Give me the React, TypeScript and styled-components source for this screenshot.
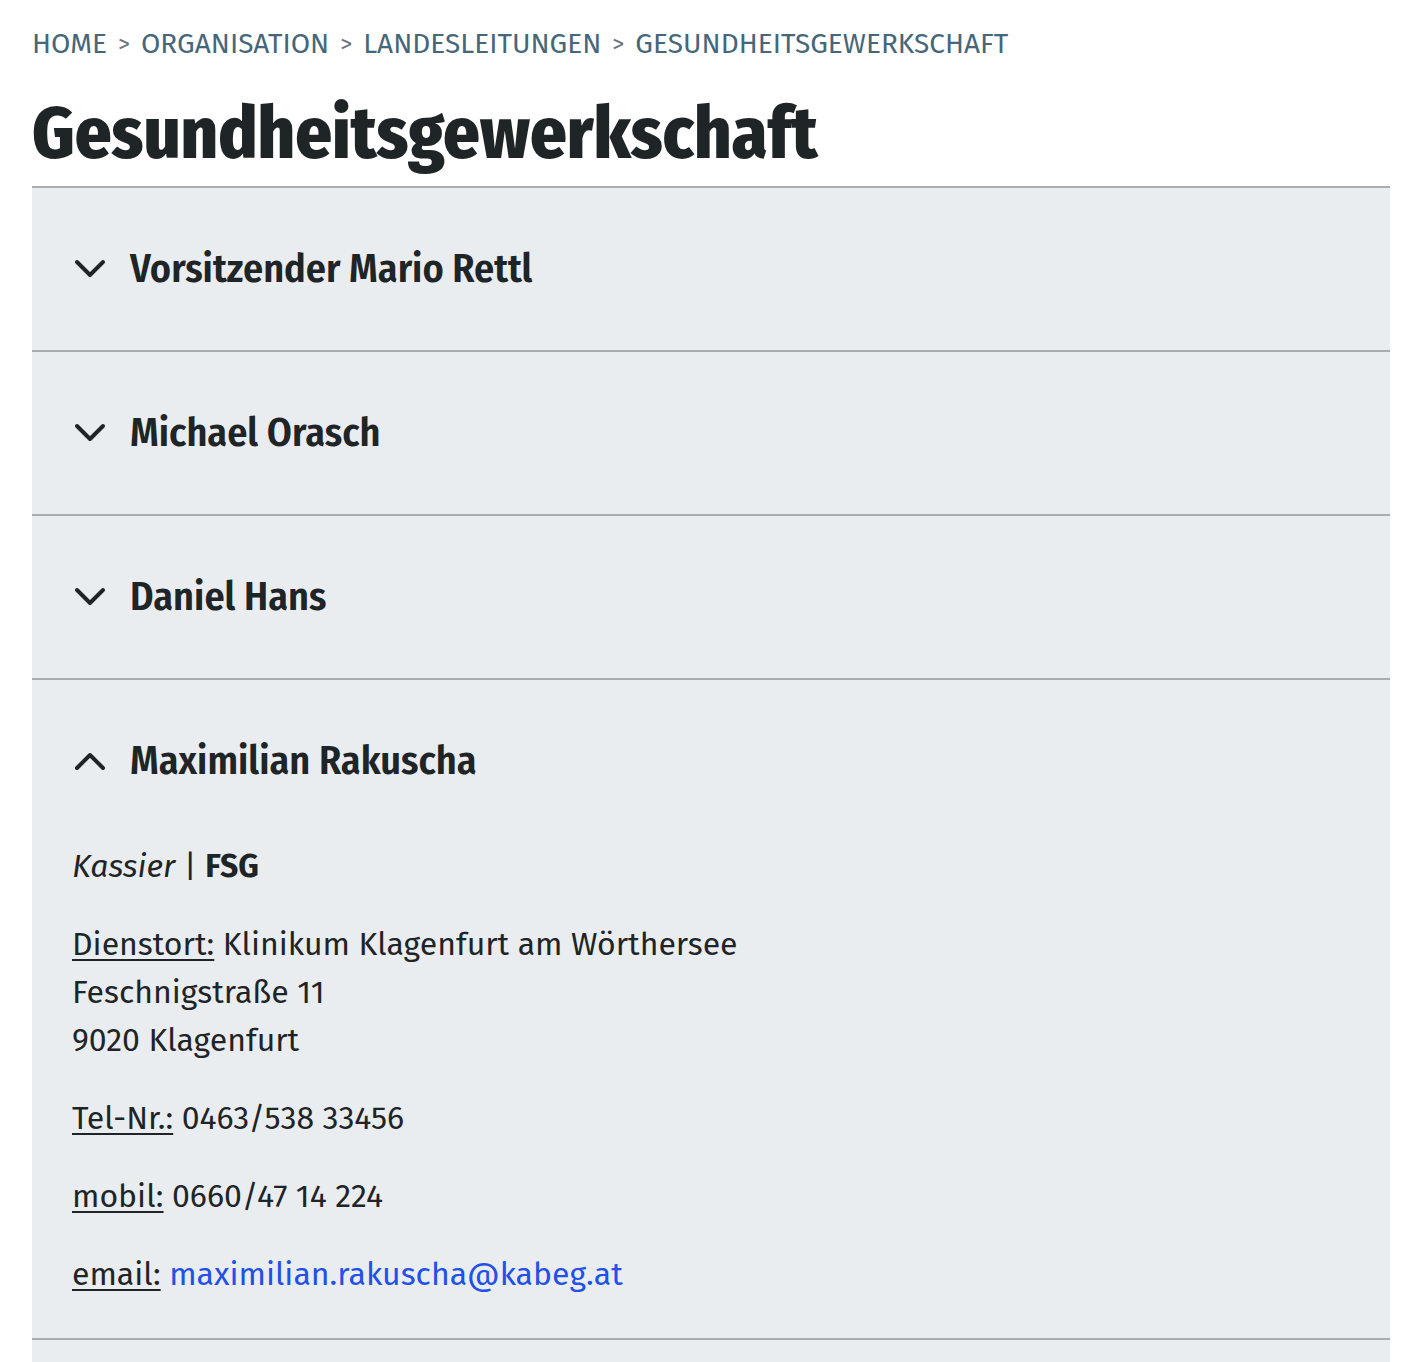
import React, { useState } from "react";
import styled, { createGlobalStyle } from "styled-components";

const GlobalStyle = createGlobalStyle`
  html, body {
    margin: 0;
    padding: 0;
    background: #ffffff;
  }
  body {
    font-family: "Fira Sans", Roboto, "Liberation Sans", sans-serif;
    color: #1f2427;
  }
`;

const condensed = `"Fira Sans Condensed", "Liberation Sans Narrow", "DejaVu Sans Condensed", Roboto, sans-serif`;

const Page = styled.div`
  padding: 26px 30px 0 32px;
`;

const Breadcrumb = styled.nav`
  display: flex;
  align-items: center;
  gap: 11px;
  font-size: 28px;
  line-height: 36px;
  text-transform: uppercase;
  color: #466779;
`;

const Crumb = styled.a`
  color: #466779;
  text-decoration: none;
`;

const CrumbSep = styled.span`
  color: #6d7378;
  font-size: 24px;
`;

const Title = styled.h1`
  margin: 24px 0 4px;
  font-family: ${condensed};
  font-stretch: condensed;
  font-weight: 800;
  font-size: 72px;
  line-height: 96px;
  color: #1f2427;
`;

const Accordion = styled.div`
  display: flex;
  flex-direction: column;
`;

const Item = styled.section`
  background: #e9edf0;
  border-top: 2px solid #a9adb0;
`;

const Header = styled.button`
  display: flex;
  align-items: center;
  gap: 24px;
  width: 100%;
  min-height: 162px;
  padding: 0 40px 0 42px;
  border: 0;
  background: transparent;
  cursor: pointer;
  text-align: left;
  color: #1f2427;
`;

const HeaderTitle = styled.span`
  font-family: ${condensed};
  font-stretch: condensed;
  font-weight: 600;
  font-size: 40px;
  line-height: 48px;
`;

const Chevron = styled.svg<{ $open: boolean }>`
  width: 32px;
  height: 20px;
  flex: none;
  transform: ${(p) => (p.$open ? "rotate(180deg)" : "none")};
`;

const Body = styled.div`
  padding: 0 40px 40px 40px;
  font-size: 32px;
  line-height: 48px;
`;

const Para = styled.p`
  margin: 0 0 30px;
  &:last-child {
    margin-bottom: 0;
  }
`;

const Label = styled.span`
  text-decoration: underline;
  text-underline-offset: 4px;
  text-decoration-thickness: 2px;
`;

const Role = styled.em`
  font-style: italic;
`;

const Mail = styled.a`
  color: #2350e6;
  text-decoration: none;
`;

type Person = {
  name: string;
};

const people: Person[] = [
  { name: "Vorsitzender Mario Rettl" },
  { name: "Michael Orasch" },
  { name: "Daniel Hans" },
  { name: "Maximilian Rakuscha" },
  { name: "" },
];

function ChevronIcon({ open }: { open: boolean }) {
  return (
    <Chevron $open={open} viewBox="0 0 32 20" fill="none">
      <path d="M3 3 L16 16 L29 3" stroke="#1f2427" strokeWidth="4" strokeLinecap="round" strokeLinejoin="round" />
    </Chevron>
  );
}

export default function App() {
  const [open, setOpen] = useState(3);

  function renderDetails() {
    return (
      <Body>
        <Para>
          <Role>Kassier</Role> | <strong>FSG</strong>
        </Para>
        <Para>
          <Label>Dienstort:</Label> Klinikum Klagenfurt am Wörthersee
          <br />
          Feschnigstraße 11
          <br />
          9020 Klagenfurt
        </Para>
        <Para>
          <Label>Tel-Nr.:</Label> 0463/538 33456
        </Para>
        <Para>
          <Label>mobil:</Label> 0660/47 14 224
        </Para>
        <Para>
          <Label>email:</Label> <Mail href="#">maximilian.rakuscha@kabeg.at</Mail>
        </Para>
      </Body>
    );
  }

  return (
    <Page>
      <GlobalStyle />
      <Breadcrumb>
        <Crumb href="#">Home</Crumb>
        <CrumbSep>&gt;</CrumbSep>
        <Crumb href="#">Organisation</Crumb>
        <CrumbSep>&gt;</CrumbSep>
        <Crumb href="#">Landesleitungen</Crumb>
        <CrumbSep>&gt;</CrumbSep>
        <Crumb href="#">Gesundheitsgewerkschaft</Crumb>
      </Breadcrumb>
      <Title>Gesundheitsgewerkschaft</Title>
      <Accordion>
        {people.map((p, i) => (
          <Item key={i}>
            <Header onClick={() => setOpen(open === i ? -1 : i)}>
              <ChevronIcon open={open === i} />
              <HeaderTitle>{p.name}</HeaderTitle>
            </Header>
            {open === i && renderDetails()}
          </Item>
        ))}
      </Accordion>
    </Page>
  );
}
